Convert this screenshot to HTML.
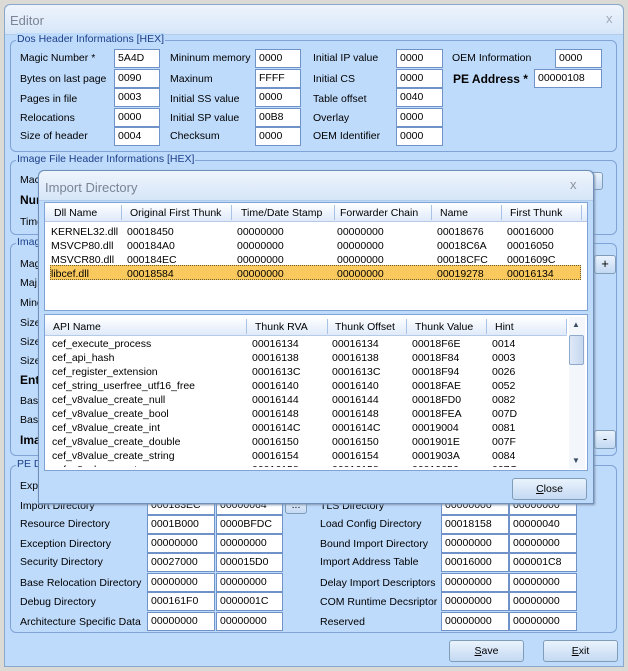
<!DOCTYPE html>
<html><head><style>
*{margin:0;padding:0;box-sizing:border-box}
body{width:628px;height:671px;overflow:hidden;background:#dcdad5;font-family:"Liberation Sans",Tahoma,sans-serif;font-size:10.5px;color:#000;position:relative}
.a{position:absolute;white-space:nowrap}
.win{position:absolute;left:4px;top:4px;width:620px;height:663px;background:#bfdbfb;border:1px solid #8aa8cc;border-radius:6px 6px 0 0}
.tb{position:absolute;left:0;top:0;right:0;height:30px;background:linear-gradient(#eef4fc,#d6e6f8);border-radius:6px 6px 0 0;border-bottom:1px solid #b2cbe8}
.tt{position:absolute;color:#7a8494;font-size:13px}
.grp{position:absolute;border:1px solid #7fa3d6;border-radius:6px}
.gl{position:absolute;top:-8px;left:5px;background:#bfdbfb;color:#1c3f8a;padding:0 1px;font-size:10.5px}
.in{position:absolute;height:19px;background:#fff;border:1px solid #6f93c9;padding:2px 3px;font-size:10.5px}
.btn{position:absolute;border:1px solid #7f9db9;border-radius:3px;background:linear-gradient(#eaf3fd,#c3d9f3);text-align:center;font-size:10.5px}
.dlg{position:absolute;left:38px;top:170px;width:556px;height:334px;background:#bfdbfb;border:1px solid #6f8fb8;border-radius:6px 6px 0 0;box-shadow:1px 1px 2px #7f93ad}
.list{position:absolute;background:#fff;border:1px solid #7fa3d6;overflow:hidden}
.hd{position:absolute;left:0;right:0;top:0;height:19px;background:linear-gradient(#fff,#dfeafa);border-bottom:1px solid #b5cbe8}
.hc{position:absolute;top:4px}
.dv{position:absolute;top:2px;width:1px;height:15px;background:#a9c3e6}
b{font-weight:bold}
</style></head><body>
<div class="win">
 <div class="tb"><div class="tt" style="left:5px;top:8px">Editor</div><div class="tt" style="left:601px;top:6px;font-size:13px;color:#a0a8b4">x</div></div>
</div>
<div class="grp" style="left:10px;top:40px;width:607px;height:112px"><div class="gl">Dos Header Informations [HEX]</div></div>
<div class="a" style="left:20px;top:52px">Magic Number *</div><div class="in" style="left:114px;top:49px;width:46px">5A4D</div>
<div class="a" style="left:20px;top:73px">Bytes on last page</div><div class="in" style="left:114px;top:69px;width:46px">0090</div>
<div class="a" style="left:20px;top:93px">Pages in file</div><div class="in" style="left:114px;top:88px;width:46px">0003</div>
<div class="a" style="left:20px;top:112px">Relocations</div><div class="in" style="left:114px;top:108px;width:46px">0000</div>
<div class="a" style="left:20px;top:130px">Size of header</div><div class="in" style="left:114px;top:127px;width:46px">0004</div>
<div class="a" style="left:170px;top:52px">Mininum memory</div><div class="in" style="left:255px;top:49px;width:46px">0000</div>
<div class="a" style="left:170px;top:73px">Maxinum</div><div class="in" style="left:255px;top:69px;width:46px">FFFF</div>
<div class="a" style="left:170px;top:93px">Initial SS value</div><div class="in" style="left:255px;top:88px;width:46px">0000</div>
<div class="a" style="left:170px;top:112px">Initial SP value</div><div class="in" style="left:255px;top:108px;width:46px">00B8</div>
<div class="a" style="left:170px;top:130px">Checksum</div><div class="in" style="left:255px;top:127px;width:46px">0000</div>
<div class="a" style="left:313px;top:52px">Initial IP value</div><div class="in" style="left:396px;top:49px;width:47px">0000</div>
<div class="a" style="left:313px;top:73px">Initial CS</div><div class="in" style="left:396px;top:69px;width:47px">0000</div>
<div class="a" style="left:313px;top:93px">Table offset</div><div class="in" style="left:396px;top:88px;width:47px">0040</div>
<div class="a" style="left:313px;top:112px">Overlay</div><div class="in" style="left:396px;top:108px;width:47px">0000</div>
<div class="a" style="left:313px;top:130px">OEM Identifier</div><div class="in" style="left:396px;top:127px;width:47px">0000</div>
<div class="a" style="left:452px;top:52px">OEM Information</div><div class="in" style="left:555px;top:49px;width:47px">0000</div>
<div class="a" style="left:453px;top:72px;font-size:12px"><b>PE Address *</b></div><div class="in" style="left:534px;top:69px;width:68px">00000108</div>
<div class="grp" style="left:10px;top:160px;width:607px;height:75px"><div class="gl">Image File Header Informations [HEX]</div></div>
<div class="a" style="left:20px;top:174px">Mac</div><div class="a" style="left:20px;top:193px;font-size:12px"><b>Num</b></div><div class="a" style="left:20px;top:216px">Time</div>
<div class="btn" style="left:588px;top:172px;width:15px;height:18px"></div>
<div class="grp" style="left:10px;top:243px;width:607px;height:213px"><div class="gl">Image</div></div>
<div class="a" style="left:20px;top:258px">Mag</div><div class="a" style="left:20px;top:277px">Maj</div><div class="a" style="left:20px;top:297px">Mino</div>
<div class="a" style="left:20px;top:317px">Size</div><div class="a" style="left:20px;top:336px">Size</div><div class="a" style="left:20px;top:355px">Size</div>
<div class="a" style="left:20px;top:373px;font-size:12px"><b>Ent</b></div><div class="a" style="left:20px;top:395px">Base</div><div class="a" style="left:20px;top:414px">Base</div><div class="a" style="left:20px;top:433px;font-size:12px"><b>Ima</b></div>
<div class="btn" style="left:594px;top:255px;width:22px;height:19px;font-size:13px">+</div>
<div class="btn" style="left:594px;top:430px;width:22px;height:19px;font-size:13px">-</div>
<div class="grp" style="left:10px;top:465px;width:607px;height:168px"><div class="gl">PE Data Directories</div></div>
<div class="a" style="left:20px;top:480px">Export Directory</div>
<div class="a" style="left:20px;top:500px">Import Directory</div><div class="in" style="left:147px;top:496px;width:68px">000183EC</div><div class="in" style="left:216px;top:496px;width:67px">00000064</div><div class="btn" style="left:285px;top:500px;width:22px;height:14px;line-height:8px">...</div>
<div class="a" style="left:20px;top:518px">Resource Directory</div><div class="in" style="left:147px;top:515px;width:68px">0001B000</div><div class="in" style="left:216px;top:515px;width:67px">0000BFDC</div>
<div class="a" style="left:20px;top:538px">Exception Directory</div><div class="in" style="left:147px;top:534px;width:68px">00000000</div><div class="in" style="left:216px;top:534px;width:67px">00000000</div>
<div class="a" style="left:20px;top:556px">Security Directory</div><div class="in" style="left:147px;top:553px;width:68px">00027000</div><div class="in" style="left:216px;top:553px;width:67px">000015D0</div>
<div class="a" style="left:20px;top:577px">Base Relocation Directory</div><div class="in" style="left:147px;top:573px;width:68px">00000000</div><div class="in" style="left:216px;top:573px;width:67px">00000000</div>
<div class="a" style="left:20px;top:596px">Debug Directory</div><div class="in" style="left:147px;top:592px;width:68px">000161F0</div><div class="in" style="left:216px;top:592px;width:67px">0000001C</div>
<div class="a" style="left:20px;top:616px">Architecture Specific Data</div><div class="in" style="left:147px;top:612px;width:68px">00000000</div><div class="in" style="left:216px;top:612px;width:67px">00000000</div>
<div class="a" style="left:320px;top:500px">TLS Directory</div><div class="in" style="left:441px;top:496px;width:68px">00000000</div><div class="in" style="left:509px;top:496px;width:68px">00000000</div>
<div class="a" style="left:320px;top:518px">Load Config Directory</div><div class="in" style="left:441px;top:515px;width:68px">00018158</div><div class="in" style="left:509px;top:515px;width:68px">00000040</div>
<div class="a" style="left:320px;top:538px">Bound Import Directory</div><div class="in" style="left:441px;top:534px;width:68px">00000000</div><div class="in" style="left:509px;top:534px;width:68px">00000000</div>
<div class="a" style="left:320px;top:556px">Import Address Table</div><div class="in" style="left:441px;top:553px;width:68px">00016000</div><div class="in" style="left:509px;top:553px;width:68px">000001C8</div>
<div class="a" style="left:320px;top:577px">Delay Import Descriptors</div><div class="in" style="left:441px;top:573px;width:68px">00000000</div><div class="in" style="left:509px;top:573px;width:68px">00000000</div>
<div class="a" style="left:320px;top:596px">COM Runtime Decsriptor</div><div class="in" style="left:441px;top:592px;width:68px">00000000</div><div class="in" style="left:509px;top:592px;width:68px">00000000</div>
<div class="a" style="left:320px;top:616px">Reserved</div><div class="in" style="left:441px;top:612px;width:68px">00000000</div><div class="in" style="left:509px;top:612px;width:68px">00000000</div>
<div class="btn" style="left:449px;top:640px;width:75px;height:22px;line-height:20px"><u>S</u>ave</div>
<div class="btn" style="left:543px;top:640px;width:75px;height:22px;line-height:20px"><u>E</u>xit</div>

<div class="dlg">
 <div class="tb" style="height:30px"><div class="tt" style="left:6px;top:9px">Import Directory</div><div class="tt" style="left:531px;top:6px;color:#8a929e">x</div></div>
</div>
<div class="list" style="left:44px;top:202px;width:544px;height:109px">
 <div class="hd"><div class="hc" style="left:9px">Dll Name</div><div class="dv" style="left:76px"></div><div class="hc" style="left:85px">Original First Thunk</div><div class="dv" style="left:186px"></div><div class="hc" style="left:196px">Time/Date Stamp</div><div class="dv" style="left:289px"></div><div class="hc" style="left:295px">Forwarder Chain</div><div class="dv" style="left:386px"></div><div class="hc" style="left:395px">Name</div><div class="dv" style="left:456px"></div><div class="hc" style="left:465px">First Thunk</div><div class="dv" style="left:536px"></div></div>
</div>
<div class="a" style="left:50px;top:265px;width:531px;height:15px;background:#fac95e;border:1px dotted #6a5a2a"></div>
<div class="a" style="left:51px;top:225px;line-height:14px">KERNEL32.dll<br>MSVCP80.dll<br>MSVCR80.dll<br>libcef.dll</div>
<div class="a" style="left:127px;top:225px;line-height:14px">00018450<br>000184A0<br>000184EC<br>00018584</div>
<div class="a" style="left:237px;top:225px;line-height:14px">00000000<br>00000000<br>00000000<br>00000000</div>
<div class="a" style="left:337px;top:225px;line-height:14px">00000000<br>00000000<br>00000000<br>00000000</div>
<div class="a" style="left:437px;top:225px;line-height:14px">00018676<br>00018C6A<br>00018CFC<br>00019278</div>
<div class="a" style="left:507px;top:225px;line-height:14px">00016000<br>00016050<br>0001609C<br>00016134</div>

<div class="list" style="left:44px;top:314px;width:544px;height:157px">
 <div class="hd" style="top:2px;right:20px"><div class="hc" style="left:8px">API Name</div><div class="dv" style="left:201px"></div><div class="hc" style="left:210px">Thunk RVA</div><div class="dv" style="left:282px"></div><div class="hc" style="left:290px">Thunk Offset</div><div class="dv" style="left:361px"></div><div class="hc" style="left:370px">Thunk Value</div><div class="dv" style="left:441px"></div><div class="hc" style="left:450px">Hint</div><div class="dv" style="left:521px"></div></div>
 <div style="position:absolute;right:2px;top:2px;width:16px;height:152px;background:#f3f7fc">
  <div style="position:absolute;left:3px;top:3px;font-size:8px;color:#3b4c66">&#9650;</div>
  <div style="position:absolute;left:0;top:18px;width:15px;height:30px;border:1px solid #8fa9cc;border-radius:2px;background:linear-gradient(90deg,#dfe9f7,#c6d7ef)"></div>
  <div style="position:absolute;left:3px;top:139px;font-size:8px;color:#3b4c66">&#9660;</div>
 </div>
</div>
<div class="a" style="left:52px;top:337px;line-height:14px;height:130px;overflow:hidden">cef_execute_process<br>cef_api_hash<br>cef_register_extension<br>cef_string_userfree_utf16_free<br>cef_v8value_create_null<br>cef_v8value_create_bool<br>cef_v8value_create_int<br>cef_v8value_create_double<br>cef_v8value_create_string<br>cef_v8value_create_array</div>
<div class="a" style="left:252px;top:337px;line-height:14px;height:130px;overflow:hidden">00016134<br>00016138<br>0001613C<br>00016140<br>00016144<br>00016148<br>0001614C<br>00016150<br>00016154<br>00016158</div>
<div class="a" style="left:332px;top:337px;line-height:14px;height:130px;overflow:hidden">00016134<br>00016138<br>0001613C<br>00016140<br>00016144<br>00016148<br>0001614C<br>00016150<br>00016154<br>00016158</div>
<div class="a" style="left:412px;top:337px;line-height:14px;height:130px;overflow:hidden">00018F6E<br>00018F84<br>00018F94<br>00018FAE<br>00018FD0<br>00018FEA<br>00019004<br>0001901E<br>0001903A<br>00019056</div>
<div class="a" style="left:492px;top:337px;line-height:14px;height:130px;overflow:hidden">0014<br>0003<br>0026<br>0052<br>0082<br>007D<br>0081<br>007F<br>0084<br>007C</div>
<div class="btn" style="left:512px;top:478px;width:75px;height:22px;line-height:20px"><u>C</u>lose</div>
</body></html>
